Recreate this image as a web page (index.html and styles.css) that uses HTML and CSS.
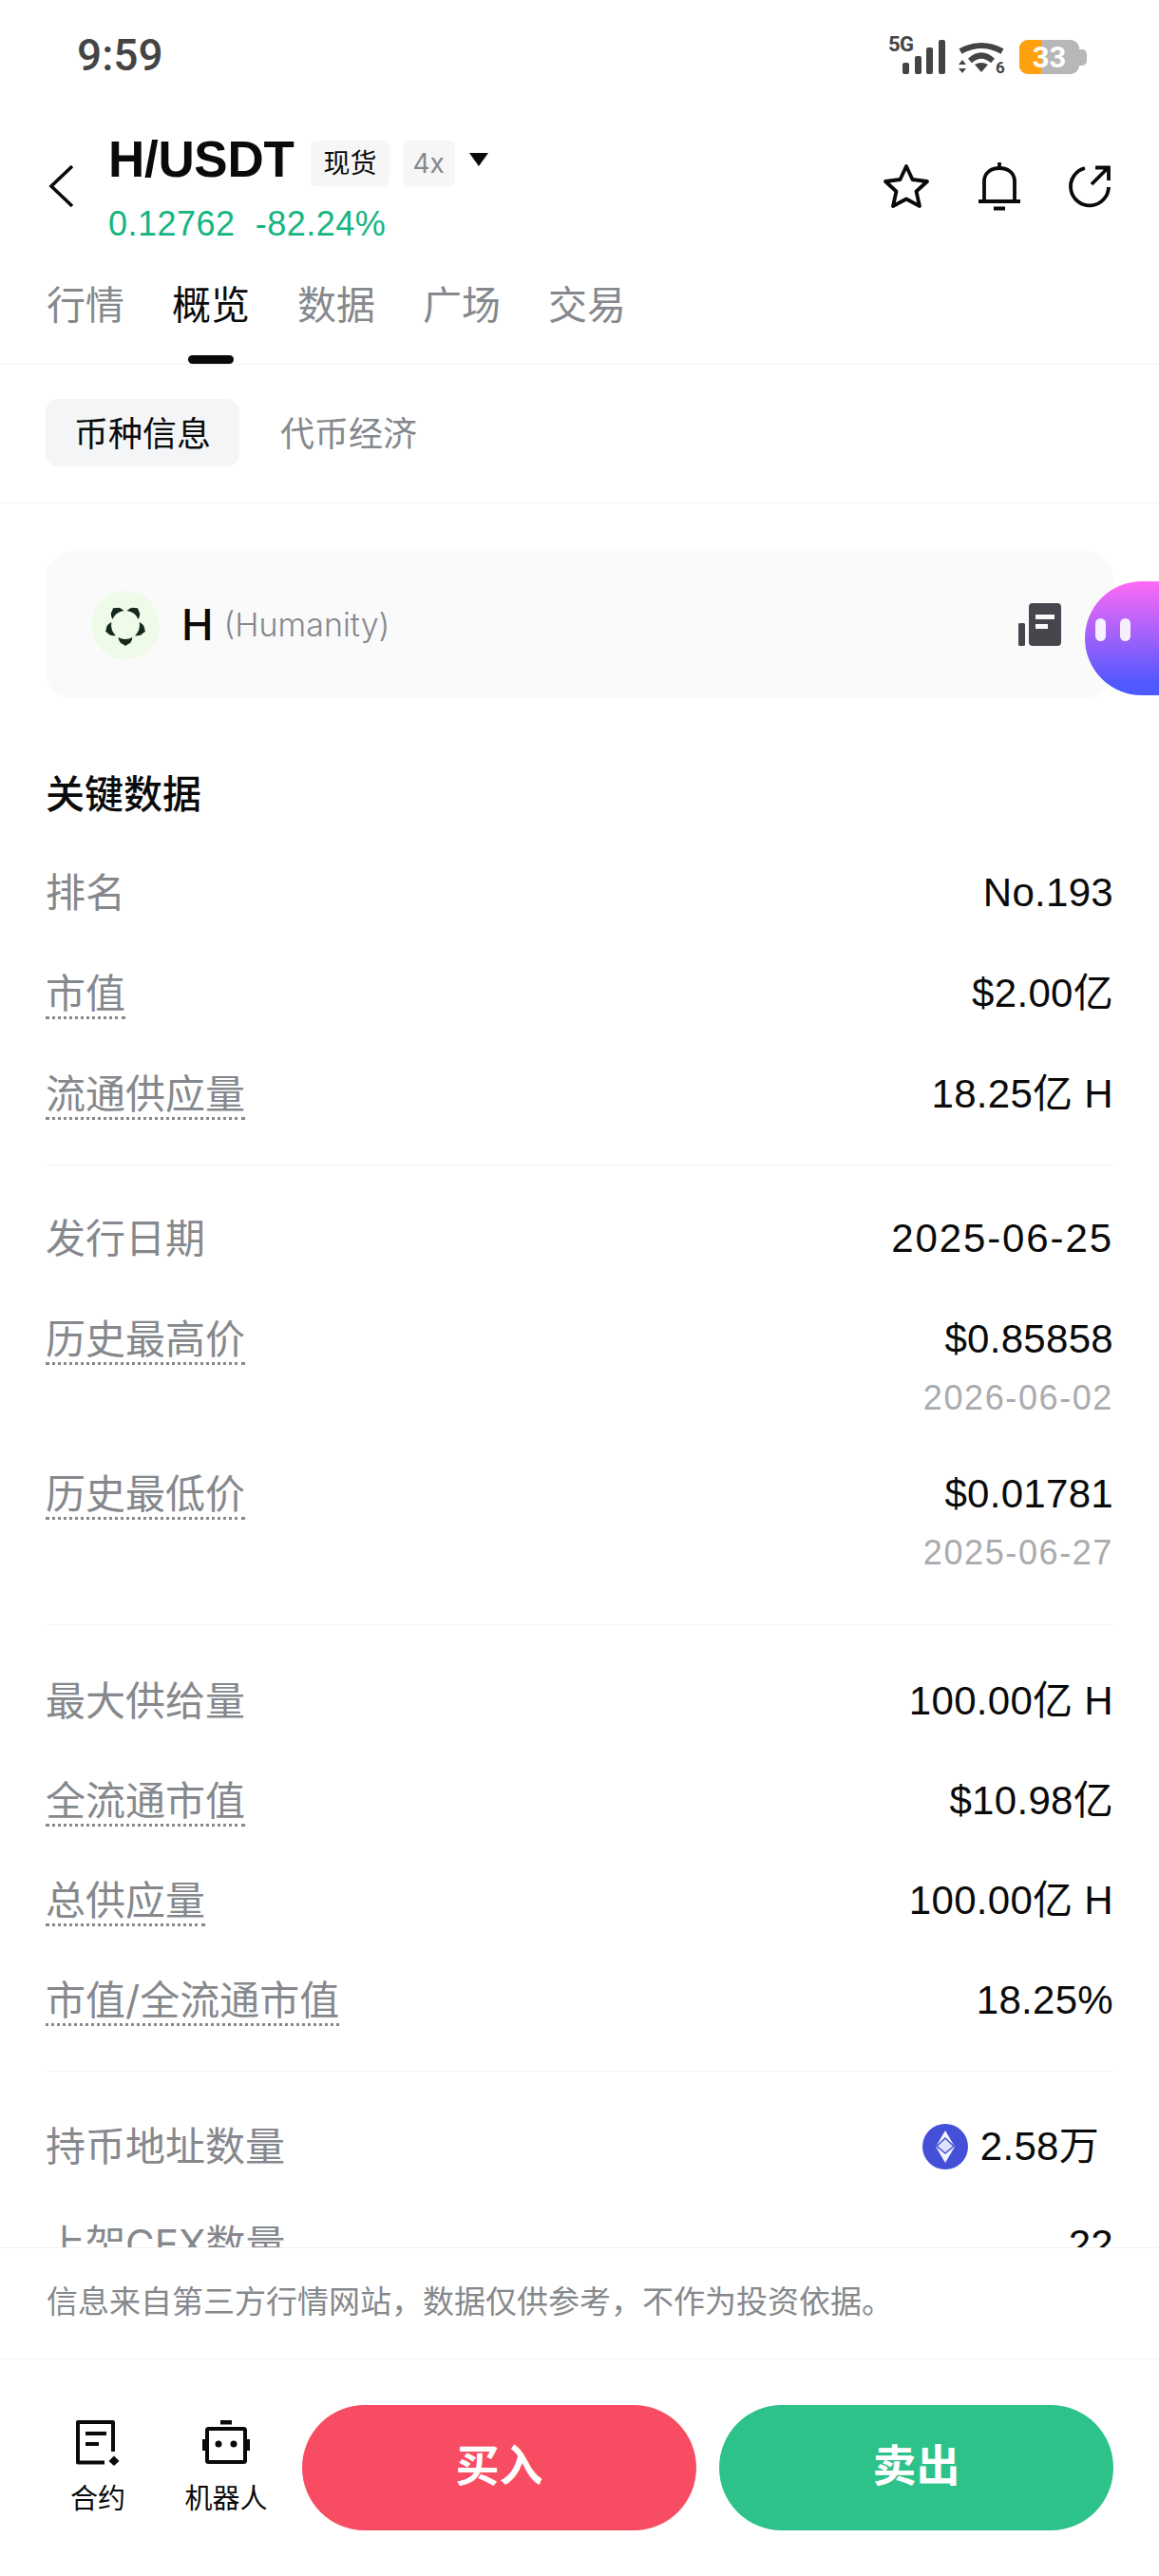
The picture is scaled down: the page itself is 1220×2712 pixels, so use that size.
FILE: index.html
```html
<!DOCTYPE html>
<html lang="zh-CN">
<head>
  <meta charset="UTF-8" />
  <meta name="viewport" content="width=device-width, initial-scale=1" />
  <title>H/USDT</title>
  <link rel="stylesheet" href="styles.css">
</head>
<body>
  <div class="status-bar">
    <span class="status-time">9:59</span>
    <div class="status-icons">
      <svg class="signal" width="60" height="40" viewBox="0 0 60 40">
        <text x="0" y="16" class="signal-text">5G</text>
        <rect x="15" y="28" width="7" height="12" rx="2"/>
        <rect x="28" y="21" width="7" height="19" rx="2"/>
        <rect x="40" y="12" width="7" height="28" rx="2"/>
        <rect x="53" y="4" width="7" height="36" rx="2"/>
      </svg>
      <svg class="wifi" width="50" height="33" viewBox="0 0 50 33">
        <path d="M2 9 Q24 -3 46 9" fill="none" stroke="#444" stroke-width="6"/>
        <path d="M12 19 Q24 8 36 19" fill="none" stroke="#444" stroke-width="6"/>
        <path d="M17 23 Q24 19 31 23 L24 31Z" fill="#444"/>
        <path d="M4 18 L8 23 L0 23Z M0 27 L8 27 L4 32Z" fill="#444"/>
        <text x="39" y="32" class="wifi-text">6</text>
      </svg>
      <div class="battery">
        <div class="battery-body"><span class="battery-fill"></span><span class="battery-num">33</span></div>
        <span class="battery-cap"></span>
      </div>
    </div>
  </div>

  <div class="header">
    <svg class="back" width="28" height="46" viewBox="0 0 28 46">
      <path d="M25 2 L3 23 L25 44" fill="none" stroke="#0a0a0a" stroke-width="3.600"/>
    </svg>
    <div class="pair">
      <div class="pair-top">
        <span class="pair-name">H/USDT</span>
        <span class="tag">现货</span>
        <span class="tag tag-gray">4x</span>
        <span class="caret"></span>
      </div>
      <div class="pair-price"><span>0.12762</span><span>-82.24%</span></div>
    </div>
    <div class="header-actions">
      <svg width="52" height="50" viewBox="0 0 52 50">
        <path d="M26 4 L32.500 18 L48 20 L36.500 30.500 L40 46 L26 38.500 L12 46 L15.500 30.500 L4 20 L19.500 18Z" fill="none" stroke="#0a0a0a" stroke-width="3.800" stroke-linejoin="round"/>
      </svg>
      <svg width="44" height="52" viewBox="0 0 44 52">
        <path d="M22 1 V7 M6 41 V21 C6 12 13 7 22 7 C31 7 38 12 38 21 V41 M0 42 H44 M16 49.500 H28" fill="none" stroke="#0a0a0a" stroke-width="3.800"/>
      </svg>
      <svg width="46" height="46" viewBox="0 0 46 46">
        <path d="M18 4 A20 20 0 1 0 43 24" fill="none" stroke="#0a0a0a" stroke-width="3.800"/>
        <path d="M25 21 L42 4 M29 3.500 H43 V17" fill="none" stroke="#0a0a0a" stroke-width="3.800"/>
      </svg>
    </div>
  </div>

  <div class="tabs">
    <span class="tab">行情</span>
    <span class="tab tab-active">概览</span>
    <span class="tab">数据</span>
    <span class="tab">广场</span>
    <span class="tab">交易</span>
  </div>

  <div class="subtabs">
    <span class="subtab subtab-active">币种信息</span>
    <span class="subtab">代币经济</span>
  </div>

  <div class="content">
    <div class="coin-card">
      <div class="coin-logo">
        <svg width="72" height="72" viewBox="0 0 72 72">
          <g fill="#14281b">
            <path d="M28.500 49 Q36 53 43.500 49 Q42.500 55 39 56 L36 58 L33 56 Q29.500 55 28.500 49Z"/>
            <path d="M28.500 49 Q36 53 43.500 49 Q42.500 55 39 56 L36 58 L33 56 Q29.500 55 28.500 49Z" transform="rotate(72 36 36)"/>
            <path d="M28.500 49 Q36 53 43.500 49 Q42.500 55 39 56 L36 58 L33 56 Q29.500 55 28.500 49Z" transform="rotate(144 36 36)"/>
            <path d="M28.500 49 Q36 53 43.500 49 Q42.500 55 39 56 L36 58 L33 56 Q29.500 55 28.500 49Z" transform="rotate(216 36 36)"/>
            <path d="M28.500 49 Q36 53 43.500 49 Q42.500 55 39 56 L36 58 L33 56 Q29.500 55 28.500 49Z" transform="rotate(288 36 36)"/>
          </g>
        </svg>
      </div>
      <span class="coin-symbol">H</span>
      <span class="coin-name">(Humanity)</span>
      <svg class="coin-doc" width="45" height="45" viewBox="0 0 45 45">
        <rect x="0" y="21" width="7" height="24" rx="1.500" fill="#46474c"/>
        <rect x="11" y="0" width="34" height="45" rx="4" fill="#46474c"/>
        <rect x="18" y="12" width="20" height="5" fill="#fafafa"/>
        <rect x="18" y="22" width="13" height="5" fill="#fafafa"/>
      </svg>
    </div>

    <h3 class="section-title">关键数据</h3>

    <div class="stat-group stat-first">
      <div class="stat-row"><span class="stat-label">排名</span><span class="stat-value">No.193</span></div>
      <div class="stat-row"><span class="stat-label dotted">市值</span><span class="stat-value">$2.00亿</span></div>
      <div class="stat-row"><span class="stat-label dotted">流通供应量</span><span class="stat-value">18.25亿 H</span></div>
    </div>

    <div class="stat-group stat-dates">
      <div class="stat-row"><span class="stat-label">发行日期</span><span class="stat-value stat-value-date">2025-06-25</span></div>
      <div class="stat-row">
        <span class="stat-label dotted">历史最高价</span>
        <div class="stat-right"><span class="stat-value">$0.85858</span><span class="stat-date">2026-06-02</span></div>
      </div>
      <div class="stat-row">
        <span class="stat-label dotted">历史最低价</span>
        <div class="stat-right"><span class="stat-value">$0.01781</span><span class="stat-date">2025-06-27</span></div>
      </div>
    </div>

    <div class="stat-group stat-supply">
      <div class="stat-row"><span class="stat-label">最大供给量</span><span class="stat-value">100.00亿 H</span></div>
      <div class="stat-row"><span class="stat-label dotted">全流通市值</span><span class="stat-value">$10.98亿</span></div>
      <div class="stat-row"><span class="stat-label dotted">总供应量</span><span class="stat-value">100.00亿 H</span></div>
      <div class="stat-row"><span class="stat-label dotted">市值/全流通市值</span><span class="stat-value">18.25%</span></div>
    </div>

    <div class="stat-group stat-last">
      <div class="stat-row">
        <span class="stat-label">持币地址数量</span>
        <div class="stat-holders">
          <svg width="48" height="48" viewBox="0 0 48 48">
            <circle cx="24" cy="24" r="24" fill="#4450d8"/>
            <path d="M24 7 L34 24 L24 41 L14 24Z" fill="#f4f5ff"/>
            <path d="M24 15 L33 23.500 L24 31 L15 23.500Z" fill="#dfe2ff" stroke="#4450d8" stroke-width="1.500"/>
          </svg>
          <span class="stat-value">2.58万</span>
        </div>
      </div>
      <div class="stat-row"><span class="stat-label">上架CEX数量</span><span class="stat-value">22</span></div>
    </div>
  </div>

  <div class="disclaimer">信息来自第三方行情网站，数据仅供参考，不作为投资依据。</div>

  <div class="action-bar">
    <div class="tool">
      <svg width="46" height="48" viewBox="0 0 46 48">
        <path d="M39 33 V2 H2 V44.500 H30" fill="none" stroke="#0a0a0a" stroke-width="4" stroke-linejoin="round"/>
        <path d="M10 14 H32 M10 25 H24" fill="none" stroke="#0a0a0a" stroke-width="4"/>
        <path d="M40 37.500 L45.500 43 L40 48 L34.500 43Z" fill="#0a0a0a"/>
      </svg>
      <span>合约</span>
    </div>
    <div class="tool">
      <svg width="50" height="48" viewBox="0 0 50 48">
        <rect x="5" y="9" width="40" height="35" rx="1.500" fill="none" stroke="#0a0a0a" stroke-width="4"/>
        <rect x="19" y="0" width="12" height="4.500" fill="#0a0a0a"/>
        <rect x="0" y="20" width="4" height="12" fill="#0a0a0a"/>
        <rect x="46" y="20" width="4" height="12" fill="#0a0a0a"/>
        <circle cx="17" cy="25" r="3.500" fill="#0a0a0a"/>
        <circle cx="33" cy="25" r="3.500" fill="#0a0a0a"/>
      </svg>
      <span>机器人</span>
    </div>
    <div class="trade-btns">
      <button class="trade-btn btn-buy">买入</button>
      <button class="trade-btn btn-sell">卖出</button>
    </div>
  </div>

  <div class="bubble"><span></span><span></span></div>
</body>
</html>
```

FILE: styles.css
```css
* {
  box-sizing: border-box;
}

html, body {
  margin: 0;
  padding: 0;
}

body {
  position: relative;
  width: 1220px;
  height: 2712px;
  overflow: hidden;
  display: flex;
  flex-direction: column;
  background: #fff;
  color: #0a0a0a;
  font-family: Inter, "Noto Sans CJK SC", sans-serif;
}

/* status bar */
.status-bar {
  height: 116px;
  flex: none;
  display: flex;
  justify-content: space-between;
  align-items: center;
  padding: 0 76px 0 81px;
}

.status-time {
  font-family: Roboto, sans-serif;
  font-size: 46px;
  font-weight: 500;
  color: #444;
}

.status-icons {
  display: flex;
  align-items: flex-end;
  gap: 14px;
}

.status-icons svg {
  display: block;
  overflow: visible;
}

.signal {
  fill: #444;
}

.signal-text {
  font-family: Roboto, sans-serif;
  font-size: 22px;
  font-weight: 700;
  fill: #444;
  letter-spacing: -0.5px;
}

.wifi-text {
  font-family: Roboto, sans-serif;
  font-size: 17px;
  font-weight: 700;
  fill: #444;
}

.battery {
  display: flex;
  align-items: center;
}

.battery-body {
  position: relative;
  width: 63px;
  height: 36px;
  border-radius: 9px;
  background: #b7b7b7;
  overflow: hidden;
  display: flex;
  justify-content: center;
  align-items: center;
}

.battery-fill {
  position: absolute;
  left: 0;
  top: 0;
  bottom: 0;
  width: 23px;
  background: #ffa00f;
}

.battery-num {
  position: relative;
  color: #fff;
  font-family: Roboto, sans-serif;
  font-size: 31px;
  font-weight: 700;
}

.battery-cap {
  width: 8px;
  height: 17px;
  background: #b7b7b7;
  border-radius: 0 5px 5px 0;
}

/* header */
.header {
  flex: none;
  display: flex;
  align-items: center;
  padding: 20px 50px 0 51px;
  height: 140px;
}

.back {
  flex: none;
  margin-right: 35px;
}

.pair {
  flex: 1;
}

.pair-top {
  display: flex;
  align-items: center;
  height: 64px;
}

.pair-name {
  font-family: "Liberation Sans", sans-serif;
  font-size: 53px;
  font-weight: 700;
  letter-spacing: -0.3px;
  margin: -2px 18px 0 0;
}

.tag {
  height: 48px;
  padding: 0 13px;
  margin: 7px 14px 0 0;
  border-radius: 6px;
  background: #f6f6f6;
  font-size: 28px;
  line-height: 48px;
}

.tag-gray {
  color: #85888c;
  padding: 0 11px;
}

.caret {
  width: 0;
  height: 0;
  margin: 0 0 0 1px;
  border-left: 10px solid transparent;
  border-right: 10px solid transparent;
  border-top: 14px solid #0a0a0a;
}

.pair-price {
  display: flex;
  gap: 21px;
  margin-top: 16px;
  height: 40px;
  line-height: 40px;
  font-family: "Liberation Sans", sans-serif;
  font-size: 36px;
  letter-spacing: 0.5px;
  color: #14b582;
}

.header-actions {
  display: flex;
  align-items: center;
  gap: 50px;
}

.header-actions svg {
  display: block;
}

/* tabs */
.tabs {
  flex: none;
  display: flex;
  gap: 50px;
  margin-top: 40px;
  padding: 0 49px 37px;
  border-bottom: 1px solid #f2f2f2;
}

.tab {
  position: relative;
  font-size: 41px;
  line-height: 50px;
  color: #85888c;
}

.tab-active {
  color: #0a0a0a;
}

.tab-active::after {
  content: "";
  position: absolute;
  left: 17px;
  right: 17px;
  bottom: -37px;
  height: 9px;
  border-radius: 5px;
  background: #0a0a0a;
}

.subtabs {
  flex: none;
  display: flex;
  gap: 13px;
  padding: 36px 48px 38px;
  border-bottom: 1px solid #f5f5f5;
}

.subtab {
  height: 71px;
  line-height: 75px;
  padding: 0 30px;
  border-radius: 14px;
  font-size: 36px;
  color: #85888c;
}

.subtab-active {
  background: #f4f5f6;
  color: #0a0a0a;
}

/* content */
.content {
  flex: 1;
  min-height: 0;
  overflow: hidden;
  padding: 50px 48px 0;
}

.coin-card {
  height: 155px;
  display: flex;
  align-items: center;
  padding: 0 55px 0 48px;
  border-radius: 28px;
  background: #fafafa;
}

.coin-logo {
  width: 72px;
  height: 72px;
  border-radius: 50%;
  background: #eefbe9;
  margin-right: 23px;
}

.coin-logo svg {
  display: block;
}

.coin-symbol {
  font-size: 45px;
  font-weight: 500;
  margin-right: 11px;
}

.coin-name {
  flex: 1;
  font-size: 34px;
  font-weight: 300;
  color: #85888c;
}

.section-title {
  margin: 76px 0 0;
  font-size: 41px;
  line-height: 50px;
  font-weight: 500;
}

.stat-group {
  display: flex;
  flex-direction: column;
  gap: 56px;
  padding: 52px 0 49px;
  border-bottom: 1px solid #f2f2f2;
}

.stat-first {
  padding-top: 54px;
}

.stat-dates {
  padding-bottom: 55px;
}

.stat-supply {
  gap: 55px;
  padding-top: 55px;
}

.stat-last {
  gap: 53px;
  padding-top: 54px;
  border-bottom: none;
}

.stat-row {
  display: flex;
  justify-content: space-between;
  align-items: flex-start;
}

.stat-label {
  font-size: 42px;
  line-height: 50px;
  height: 50px;
  color: #85888c;
}

.dotted {
  height: 52px;
  margin-bottom: -2px;
  border-bottom: 3px dotted #85888c;
}

.stat-value {
  font-family: "Liberation Sans", "Noto Sans CJK SC", sans-serif;
  font-size: 42px;
  line-height: 50px;
  letter-spacing: 0.3px;
  color: #0a0a0a;
}

.stat-value-date {
  letter-spacing: 1.900px;
}

.stat-right {
  display: flex;
  flex-direction: column;
  align-items: flex-end;
  margin-bottom: -5px;
}

.stat-date {
  margin-top: 12px;
  font-family: "Liberation Sans", sans-serif;
  font-size: 36px;
  line-height: 50px;
  letter-spacing: 1.600px;
  color: #a9abae;
}

.stat-holders {
  display: flex;
  align-items: center;
  gap: 13px;
  padding-right: 15px;
  height: 50px;
}

.stat-holders svg {
  display: block;
}

/* bottom */
.disclaimer {
  flex: none;
  height: 118px;
  padding: 38px 0 0 49px;
  background: #fff;
  border-top: 1px solid #f2f2f2;
  border-bottom: 1px solid #f2f2f2;
  font-size: 33px;
  line-height: 36px;
  color: #85888c;
}

.action-bar {
  flex: none;
  height: 228px;
  display: flex;
  align-items: center;
  gap: 25px;
  padding: 0 48px;
}

.tool {
  width: 110px;
  flex: none;
  display: flex;
  flex-direction: column;
  align-items: center;
  gap: 18px;
  font-size: 29px;
  line-height: 34px;
}

.tool svg {
  display: block;
}

.trade-btns {
  flex: 1;
  display: flex;
  gap: 24px;
}

.trade-btn {
  flex: 1;
  height: 132px;
  padding: 0 0 12px;
  border: none;
  border-radius: 66px;
  color: #fff;
  font-family: inherit;
  font-size: 46px;
  font-weight: 700;
}

.btn-buy {
  background: #f84c62;
}

.btn-sell {
  background: #2dc289;
}

.bubble {
  position: absolute;
  left: 1142px;
  top: 612px;
  width: 78px;
  height: 120px;
  border-radius: 60px 0 0 60px;
  background: linear-gradient(180deg, #ff6af5, #5058ff 90%);
}

.bubble span {
  position: absolute;
  top: 39px;
  width: 11px;
  height: 24px;
  border-radius: 6px;
  background: #f6efff;
}

.bubble span:first-child {
  left: 11px;
}

.bubble span:last-child {
  left: 37px;
}
```
